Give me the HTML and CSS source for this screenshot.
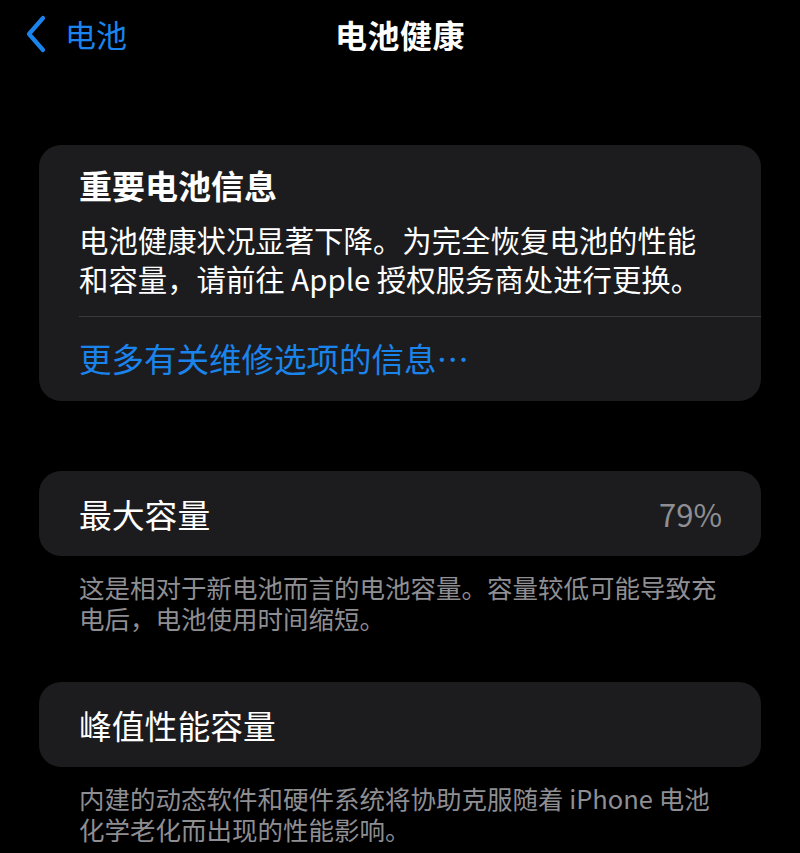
FILE: index.html
```html
<!DOCTYPE html>
<html lang="zh-CN">
<head>
  <meta charset="UTF-8" />
  <meta name="viewport" content="width=device-width, initial-scale=1.0"/>
  <title>电池健康</title>
  <link rel="stylesheet" href="styles.css">
</head>
<body>
  <!-- Navigation bar -->
  <nav class="navbar">
    <a class="back" href="#">
      <svg class="chevron" width="22" height="38" viewBox="0 0 22 38">
        <path d="M18 3 L4 19 L18 35" fill="none" stroke="currentColor" stroke-width="4.2" stroke-linecap="round" stroke-linejoin="round"/>
      </svg>
      <span>电池</span>
    </a>
    <h1 class="nav-title">电池健康</h1>
  </nav>

  <main class="content">
    <!-- Service notice -->
    <section class="card notice">
      <h2 class="notice-title">重要电池信息</h2>
      <p class="notice-body">电池健康状况显著下降。为完全恢复电池的性能和容量，请前往 Apple 授权服务商处进行更换。</p>
      <div class="divider"></div>
      <a class="link" href="#">更多有关维修选项的信息…</a>
    </section>

    <!-- Maximum capacity -->
    <section class="card row">
      <span class="row-label">最大容量</span>
      <span class="row-value">79%</span>
    </section>
    <p class="footnote">这是相对于新电池而言的电池容量。容量较低可能导致充电后，电池使用时间缩短。</p>

    <!-- Peak performance -->
    <section class="card row peak">
      <span class="row-label">峰值性能容量</span>
    </section>
    <p class="footnote">内建的动态软件和硬件系统将协助克服随着 iPhone 电池化学老化而出现的性能影响。</p>
  </main>
</body>
</html>
```

FILE: styles.css
```css
* { margin:0; padding:0; box-sizing:border-box; }
html, body { background:#000; }
body {
  font-family:"Noto Sans CJK SC", "Noto Sans", sans-serif;
  color:#fff;
  overflow:hidden;
}
a { text-decoration:none; }

.navbar {
  position:relative;
  height:68px;
  display:flex;
  align-items:center;
  justify-content:center;
}
.back {
  position:absolute;
  left:25px;
  top:15px;
  display:flex;
  align-items:center;
  gap:18px;
  color:#1a84ec;
  font-size:31px;
  line-height:38px;
}
.chevron { display:block; }
.nav-title {
  font-size:32px;
  font-weight:600;
  line-height:38px;
  letter-spacing:0.5px;
}

.content { padding:77px 39px 0; }

.card {
  background:#1c1c1e;
  border-radius:22px;
}

.notice { padding:20px 0 22px 40px; }
.notice-title {
  font-size:33px;
  font-weight:700;
  line-height:40px;
}
.notice-body {
  margin-top:15px;
  padding-right:40px;
  font-size:29.4px;
  line-height:39px;
}
.divider {
  height:1px;
  background:#38383a;
  margin:18px 0 20px;
}
.link {
  display:block;
  color:#1a84ec;
  font-size:32.5px;
  line-height:42px;
}

.row {
  margin-top:70px;
  height:85px;
  padding:0 39px 0 40px;
  display:flex;
  align-items:center;
  justify-content:space-between;
}
.row-label { font-size:32.8px; line-height:40px; }
.row-value { font-size:31px; line-height:40px; color:#8e8e93; }
.peak { margin-top:49px; }

.footnote {
  margin-top:15px;
  padding:0 40px;
  font-size:25.5px;
  line-height:31px;
  color:#8e8e93;
}
```
